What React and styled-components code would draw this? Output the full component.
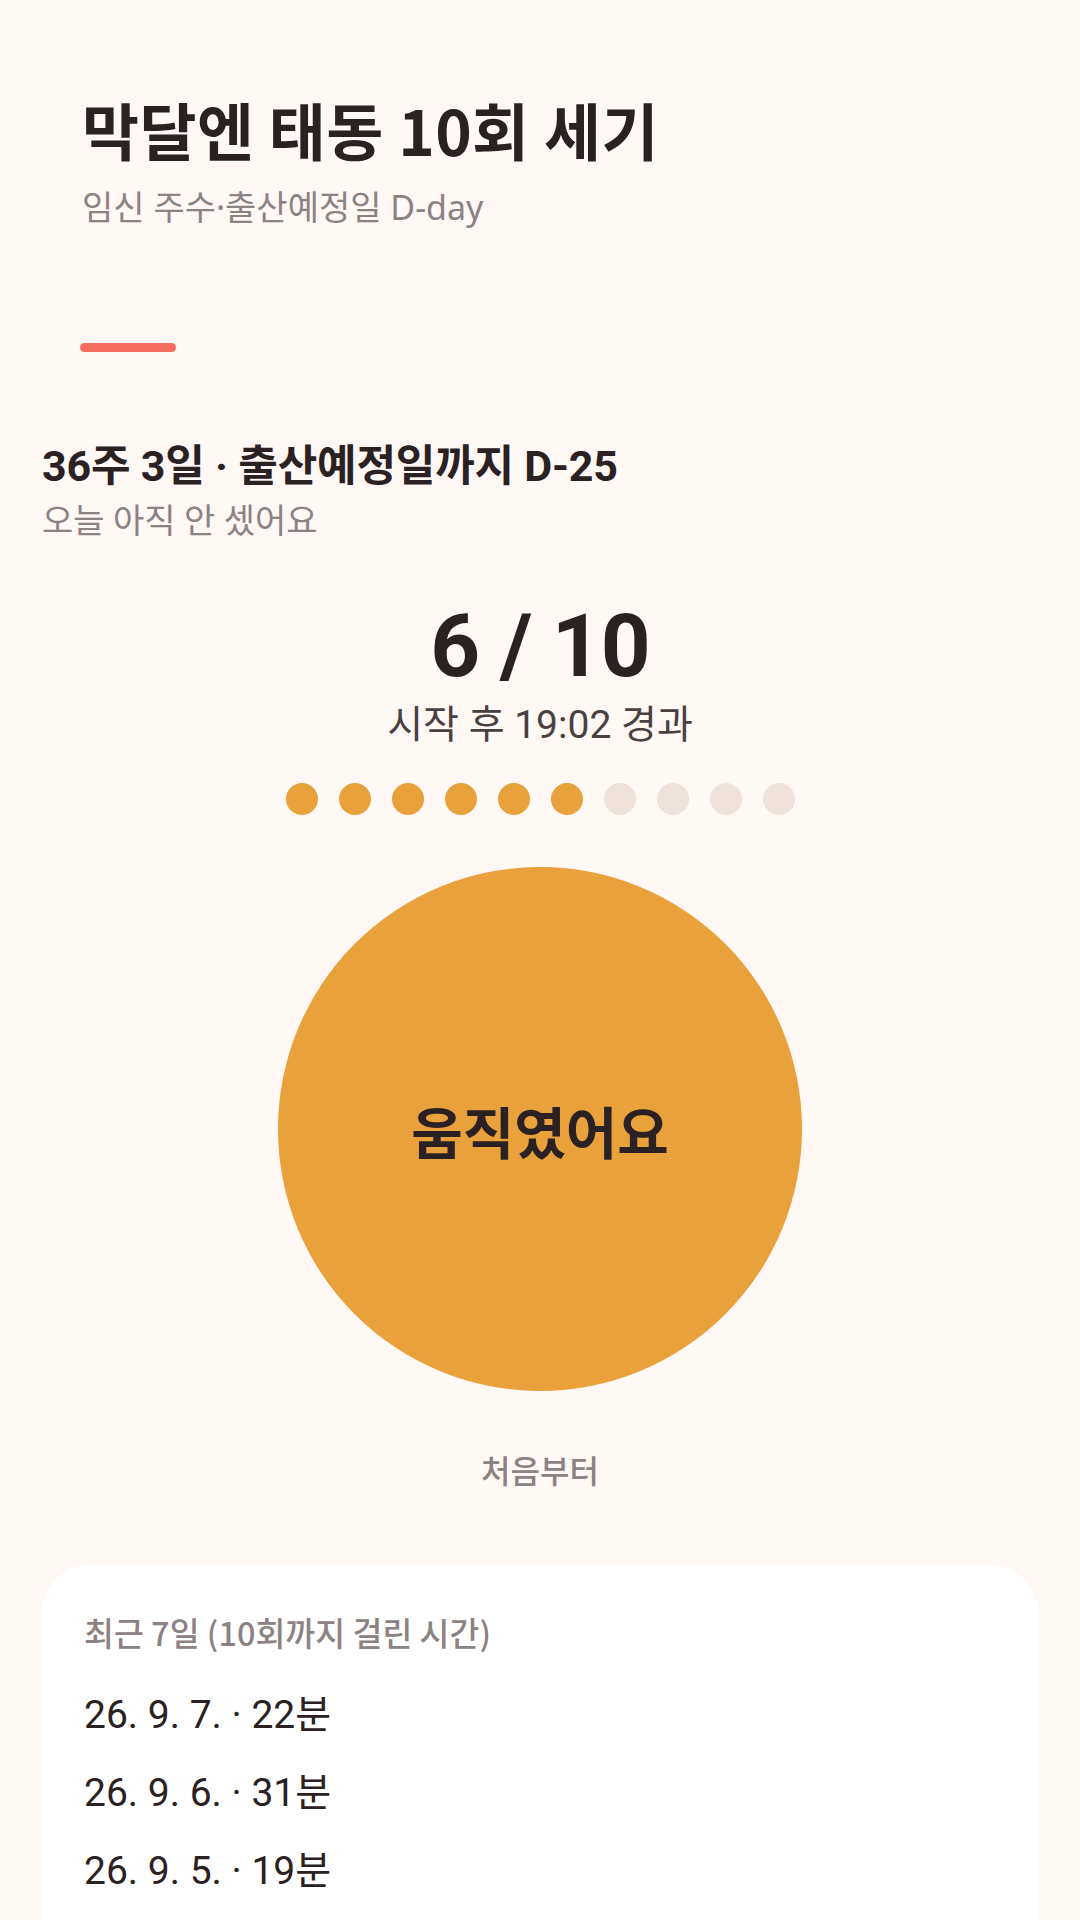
import React from "react";
import styled, { createGlobalStyle } from "styled-components";

const GlobalStyle = createGlobalStyle`
  html, body {
    margin: 0;
    padding: 0;
    background: #fff8f4;
  }
  body {
    font-family: "Roboto", "Noto Sans CJK KR", sans-serif;
    color: #2b2022;
  }
  * { box-sizing: border-box; }
`;

const Page = styled.main`
  min-height: 1920px;
  padding: 0 42px;
  display: flex;
  flex-direction: column;
`;

const Header = styled.header`
  padding: 91px 0 0 40px;
  display: flex;
  flex-direction: column;
`;

const Title = styled.h1`
  margin: 0;
  font-family: "Noto Sans CJK KR", sans-serif;
  font-size: 62px;
  line-height: 76px;
  font-weight: 700;
  letter-spacing: 0.4px;
  color: #2b2022;
`;

const Subtitle = styled.p`
  margin: 18px 0 0;
  font-family: "Noto Sans", "Noto Sans CJK KR", sans-serif;
  font-size: 34px;
  line-height: 44px;
  font-weight: 400;
  color: #8c8183;
`;

const Accent = styled.div`
  width: 96px;
  height: 9px;
  border-radius: 5px;
  background: #f26b5e;
  margin: 114px 0 0 38px;
`;

const Status = styled.section`
  margin-top: 86px;
  display: flex;
  flex-direction: column;
`;

const StatusTitle = styled.h2`
  margin: 0;
  font-size: 43px;
  line-height: 56px;
  font-weight: 700;
  letter-spacing: -0.2px;
`;

const StatusSub = styled.p`
  margin: 5px 0 0;
  font-size: 34px;
  line-height: 44px;
  color: #8c8183;
`;

const Counter = styled.section`
  margin-top: 53px;
  display: flex;
  flex-direction: column;
  align-items: center;
`;

const Count = styled.div`
  font-size: 87px;
  line-height: 100px;
  font-weight: 700;
  letter-spacing: -1px;
  color: #2b2022;
`;

const Elapsed = styled.div`
  margin-top: 5px;
  font-size: 39px;
  line-height: 48px;
  color: #4a3f41;
`;

const Dots = styled.div`
  margin-top: 34px;
  display: flex;
  gap: 21px;
`;

const Dot = styled.span`
  width: 32px;
  height: 32px;
  border-radius: 50%;
  background: ${(p) => (p.$on ? "#e9a13b" : "#efe2da")};
`;

const KickButton = styled.button`
  margin-top: 52px;
  width: 524px;
  height: 524px;
  border-radius: 50%;
  border: none;
  padding: 0;
  background: #e9a13b;
  color: #2b2022;
  font-family: "Noto Sans CJK KR", sans-serif;
  font-size: 56px;
  font-weight: 700;
  cursor: pointer;
`;

const ResetButton = styled.button`
  margin-top: 56px;
  border: none;
  background: transparent;
  font-family: "Noto Sans CJK KR", sans-serif;
  font-size: 32px;
  line-height: 44px;
  font-weight: 500;
  color: #8c8183;
  cursor: pointer;
  padding: 0 10px;
`;

const Card = styled.section`
  margin-top: 74px;
  background: #ffffff;
  border-radius: 48px 48px 0 0;
  padding: 46px 42px 60px;
  display: flex;
  flex-direction: column;
  flex: 1;
`;

const CardTitle = styled.h3`
  margin: 0;
  font-family: "Noto Sans CJK KR", sans-serif;
  font-size: 32.5px;
  line-height: 42px;
  font-weight: 500;
  color: #8c8183;
`;

const List = styled.ul`
  list-style: none;
  margin: 38px 0 0;
  padding: 0;
  display: flex;
  flex-direction: column;
  gap: 30px;
`;

const Row = styled.li`
  font-size: 39px;
  line-height: 48px;
  color: #2b2022;
`;

const history = [
  "26. 9. 7. · 22분",
  "26. 9. 6. · 31분",
  "26. 9. 5. · 19분",
];

export default function App() {
  const count = 6;
  return (
    <>
      <GlobalStyle />
      <Page>
        <Header>
          <Title>막달엔 태동 10회 세기</Title>
          <Subtitle>임신 주수·출산예정일 D-day</Subtitle>
        </Header>
        <Accent />
        <Status>
          <StatusTitle>36주 3일 · 출산예정일까지 D-25</StatusTitle>
          <StatusSub>오늘 아직 안 셌어요</StatusSub>
        </Status>
        <Counter>
          <Count>{count} / 10</Count>
          <Elapsed>시작 후 19:02 경과</Elapsed>
          <Dots>
            {Array.from({ length: 10 }, (_, i) => (
              <Dot key={i} $on={i < count} />
            ))}
          </Dots>
          <KickButton>움직였어요</KickButton>
          <ResetButton>처음부터</ResetButton>
        </Counter>
        <Card>
          <CardTitle>최근 7일 (10회까지 걸린 시간)</CardTitle>
          <List>
            {history.map((h) => (
              <Row key={h}>{h}</Row>
            ))}
          </List>
        </Card>
      </Page>
    </>
  );
}
